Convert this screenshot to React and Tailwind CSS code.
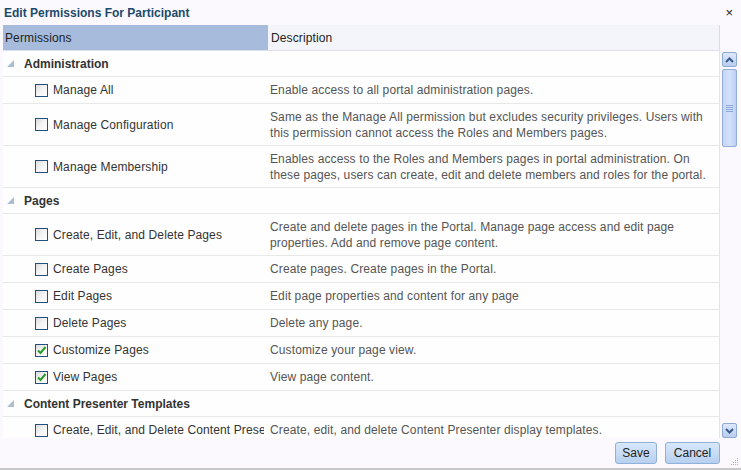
import React from 'react';

const groups = [
  {
    name: 'Administration',
    items: [
      { label: 'Manage All', desc: ['Enable access to all portal administration pages.'] },
      {
        label: 'Manage Configuration',
        desc: [
          'Same as the Manage All permission but excludes security privileges. Users with',
          'this permission cannot access the Roles and Members pages.',
        ],
      },
      {
        label: 'Manage Membership',
        desc: [
          'Enables access to the Roles and Members pages in portal administration. On',
          'these pages, users can create, edit and delete members and roles for the portal.',
        ],
      },
    ],
  },
  {
    name: 'Pages',
    items: [
      {
        label: 'Create, Edit, and Delete Pages',
        desc: [
          'Create and delete pages in the Portal. Manage page access and edit page',
          'properties. Add and remove page content.',
        ],
      },
      { label: 'Create Pages', desc: ['Create pages. Create pages in the Portal.'] },
      { label: 'Edit Pages', desc: ['Edit page properties and content for any page'] },
      { label: 'Delete Pages', desc: ['Delete any page.'] },
      { label: 'Customize Pages', desc: ['Customize your page view.'], checked: true },
      { label: 'View Pages', desc: ['View page content.'], checked: true },
    ],
  },
  {
    name: 'Content Presenter Templates',
    items: [
      {
        label: 'Create, Edit, and Delete Content Presenter Templates',
        desc: ['Create, edit, and delete Content Presenter display templates.'],
      },
    ],
  },
];

function Disclosure() {
  return (
    <svg width="7" height="7" viewBox="0 0 7 7" className="shrink-0">
      <path d="M7 0 L7 7 L0 7 Z" fill="#a9bdd3" />
    </svg>
  );
}

function Checkbox({ checked }) {
  return (
    <span className="w-[13px] h-[13px] shrink-0 border border-[#24507f] bg-gradient-to-br from-[#dcdcdc] via-[#f4f4f4] to-white flex items-center justify-center">
      {checked && (
        <svg width="11" height="11" viewBox="0 0 11 11">
          <path d="M2 5.5 L4.5 8 L9.5 2" fill="none" stroke="#2a9a2a" strokeWidth="2" />
        </svg>
      )}
    </span>
  );
}

function Scrollbar() {
  return (
    <div className="w-[17px] shrink-0 flex flex-col items-center gap-[2px] pt-[1px] pl-[1px]">
      <div className="w-[15px] h-[15px] rounded-[2px] border border-[#8ea9d3] bg-gradient-to-b from-[#dfe8fa] to-[#b9cdf0] flex items-center justify-center">
        <svg width="9" height="6" viewBox="0 0 9 6">
          <path d="M1 5 L4.5 1.5 L8 5" fill="none" stroke="#3b5a8c" strokeWidth="2" />
        </svg>
      </div>
      <div className="w-[15px] h-[78px] rounded-[2px] border border-[#93add8] bg-gradient-to-r from-[#c4d5f5] via-[#d4e1f9] to-[#bccff2] flex flex-col items-center justify-center gap-[1px]">
        <span className="w-[7px] h-px bg-[#8ca6d6]" />
        <span className="w-[7px] h-px bg-[#8ca6d6]" />
        <span className="w-[7px] h-px bg-[#8ca6d6]" />
        <span className="w-[7px] h-px bg-[#8ca6d6]" />
      </div>
      <div className="flex-1" />
      <div className="w-[15px] h-[15px] rounded-[2px] border border-[#8ea9d3] bg-gradient-to-b from-[#dfe8fa] to-[#b9cdf0] flex items-center justify-center">
        <svg width="9" height="6" viewBox="0 0 9 6">
          <path d="M1 1 L4.5 4.5 L8 1" fill="none" stroke="#3b5a8c" strokeWidth="2" />
        </svg>
      </div>
    </div>
  );
}

export default function App() {
  return (
    <div className="w-[741px] h-[470px] bg-[#fbf9fd] flex flex-col overflow-hidden text-[12px] font-['Liberation_Sans',Arial,sans-serif] border-b-2 border-[#c9c9cc]">
      {/* title bar */}
      <div className="h-[25px] shrink-0 flex items-center justify-between pl-[4px] pr-[8px]">
        <span className="font-bold text-[#1c4a6c]">Edit Permissions For Participant</span>
        <span className="text-[#222] text-[13px] leading-none">×</span>
      </div>

      {/* column headers */}
      <div className="h-[26px] shrink-0 flex ml-[3px] mr-[21px] border-b border-[#d9e1ec] tracking-[0.12px]">
        <div className="w-[265px] bg-[#a7bcdc] flex items-center pl-[2px] text-[#222]">Permissions</div>
        <div className="flex-1 bg-[#f3f5fa] flex items-center pl-[3px] text-[#222] border-r border-[#d6dde8]">Description</div>
      </div>

      {/* permission rows */}
      <div className="h-[387px] shrink-0 flex ml-[3px] mr-[4px]">
        <div className="flex-1 overflow-hidden bg-[#fdfefd] border-r border-[#e2e6ea] tracking-[0.12px]">
          {groups.map((g) => (
            <div key={g.name}>
              <div className="h-[26px] flex items-center gap-[10px] pl-[4px] border-b border-[#e6e9e6]">
                <Disclosure />
                <span className="font-bold text-[#333] tracking-normal">{g.name}</span>
              </div>
              {g.items.map((it) => (
                <div key={it.label} className={`flex items-center border-b border-[#e6e9e6] ${it.desc.length > 1 ? 'h-[42px]' : 'h-[27px]'}`}>
                  <div className="w-[265px] shrink-0 flex items-center gap-[5px] pl-[32px] pr-[4px] overflow-hidden whitespace-nowrap text-[#333]">
                    <Checkbox checked={it.checked} />
                    <span className="min-w-0 overflow-hidden">{it.label}</span>
                  </div>
                  <div className="flex-1 pl-[2px] text-[#555] leading-[16px] whitespace-nowrap">
                    {it.desc.map((line) => (
                      <div key={line}>{line}</div>
                    ))}
                  </div>
                </div>
              ))}
            </div>
          ))}
        </div>
        <Scrollbar />
      </div>

      {/* footer buttons */}
      <div className="flex-1 flex items-center justify-end gap-[8px] pr-[21px] relative">
        <button className="h-[22px] w-[42px] rounded-[3px] border border-[#8eb0d9] bg-gradient-to-b from-[#d9e8fa] to-[#b7d0ef] text-[#222]">Save</button>
        <button className="h-[22px] w-[55px] rounded-[3px] border border-[#8eb0d9] bg-gradient-to-b from-[#d9e8fa] to-[#b7d0ef] text-[#222]">Cancel</button>
        <svg width="8" height="8" viewBox="0 0 8 8" className="absolute right-[2px] bottom-[2px]">
          <g fill="#b0b0b0">
            <rect x="6" y="0" width="1" height="1" />
            <rect x="4" y="2" width="1" height="1" />
            <rect x="6" y="2" width="1" height="1" />
            <rect x="2" y="4" width="1" height="1" />
            <rect x="4" y="4" width="1" height="1" />
            <rect x="6" y="4" width="1" height="1" />
            <rect x="0" y="6" width="1" height="1" />
            <rect x="2" y="6" width="1" height="1" />
            <rect x="4" y="6" width="1" height="1" />
            <rect x="6" y="6" width="1" height="1" />
          </g>
        </svg>
      </div>
    </div>
  );
}
